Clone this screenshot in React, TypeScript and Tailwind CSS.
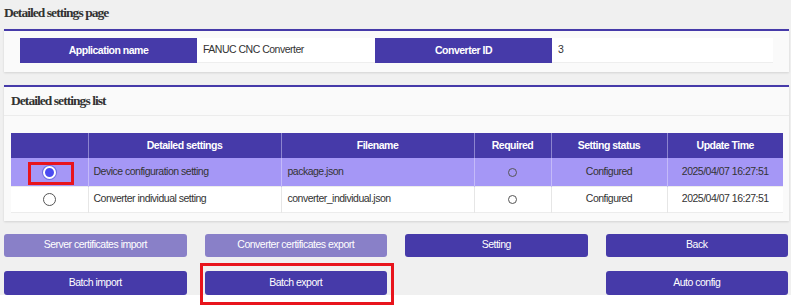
import React from "react";

const font = { fontFamily: '"Liberation Sans", Arial, sans-serif' };
const serif = { fontFamily: '"Liberation Serif", "Times New Roman", serif' };

function Radio({ checked }: { checked?: boolean }) {
  return checked ? (
    <span className="inline-block w-[13px] h-[13px] rounded-full bg-[#4b4cf0] border-[2px] border-white shadow-[0_0_0_1px_#6d6de0]" />
  ) : (
    <span className="inline-block w-[13px] h-[13px] rounded-full bg-white border border-[#555]" />
  );
}

export default function App() {
  const rows = [
    { name: "Device configuration setting", file: "package.json", sel: true },
    { name: "Converter individual setting", file: "converter_individual.json", sel: false },
  ];
  return (
    <div className="relative w-[791px] h-[306px] bg-white overflow-hidden tracking-[-0.5px]" style={font}>
      <div className="h-[295px] bg-[#f0f0f0] pl-[4px] pr-[2px]">
        <div className="h-[26px] flex items-center text-[13.5px] font-bold text-[#333] tracking-[-0.95px]" style={serif}>
          Detailed settings page
        </div>
        <div className="mt-[3px] bg-[#fafafa] border-t-[2px] border-[#463aa9] shadow-[0_1px_2px_rgba(0,0,0,0.12)] pt-[7px] pb-[9px] pl-[16px] pr-[16px]">
          <div className="flex h-[25px] text-[10.5px]">
            <div className="w-[177px] bg-[#463aa9] text-white font-bold flex items-center justify-center">Application name</div>
            <div className="w-[178px] bg-white text-[#333] flex items-center pl-[6px] border-b border-[#eee]">FANUC CNC Converter</div>
            <div className="w-[177px] bg-[#463aa9] text-white font-bold flex items-center justify-center">Converter ID</div>
            <div className="flex-1 bg-white text-[#333] flex items-center pl-[6px] border-b border-[#eee]">3</div>
          </div>
        </div>
        <div className="mt-[13px] bg-[#fafafa] border-t-[2px] border-[#463aa9] shadow-[0_1px_2px_rgba(0,0,0,0.12)] pb-[8px]">
          <div className="h-[29px] flex items-center pl-[7px] border-b border-[#ececec] text-[13.5px] font-bold text-[#333] tracking-[-0.95px]" style={serif}>
            Detailed settings list
          </div>
          <div className="pt-[17px] pl-[7px] pr-[6px]">
            <table className="w-full border-collapse text-[10.5px] table-fixed">
              <colgroup>
                <col className="w-[77px]" />
                <col className="w-[193px]" />
                <col className="w-[193px]" />
                <col className="w-[77px]" />
                <col className="w-[116px]" />
                <col />
              </colgroup>
              <thead>
                <tr className="h-[25px] bg-[#463aa9] text-white font-bold">
                  <th className="border-r border-[#8c84cf]"></th>
                  <th className="border-r border-[#8c84cf] font-bold">Detailed settings</th>
                  <th className="border-r border-[#8c84cf] font-bold">Filename</th>
                  <th className="border-r border-[#8c84cf] font-bold">Required</th>
                  <th className="border-r border-[#8c84cf] font-bold">Setting status</th>
                  <th className="font-bold">Update Time</th>
                </tr>
              </thead>
              <tbody className="text-[#333]">
                {rows.map((r, i) => (
                  <tr key={i} className={(r.sel ? "bg-[#a597f6] h-[28px]" : "bg-white h-[26px]") + " border-b border-[#ececec]"}>
                    <td className={"text-center border-r " + (r.sel ? "border-[#c4baf9]" : "border-[#e6e6e6]")}>
                      <span className="inline-flex items-center justify-center align-middle"><Radio checked={r.sel} /></span>
                    </td>
                    <td className={"pl-[5px] border-r " + (r.sel ? "border-[#c4baf9]" : "border-[#e6e6e6]")}>{r.name}</td>
                    <td className={"pl-[6px] border-r " + (r.sel ? "border-[#c4baf9]" : "border-[#e6e6e6]")}>{r.file}</td>
                    <td className={"text-center border-r " + (r.sel ? "border-[#c4baf9]" : "border-[#e6e6e6]")}>
                      <span className="inline-block align-middle w-[9px] h-[9px] rounded-full border border-[#555]" />
                    </td>
                    <td className={"text-center border-r " + (r.sel ? "border-[#c4baf9]" : "border-[#e6e6e6]")}>Configured</td>
                    <td className="text-center">2025/04/07 16:27:51</td>
                  </tr>
                ))}
              </tbody>
            </table>
          </div>
        </div>
        <div className="mt-[13px] grid grid-cols-4 gap-x-[18px] gap-y-[14px] pr-[1px] text-[10.5px] text-white">
          <button className="h-[23px] rounded-[3px] bg-[#8980c8]">Server certificates import</button>
          <button className="h-[23px] rounded-[3px] bg-[#8980c8]">Converter certificates export</button>
          <button className="h-[23px] rounded-[3px] bg-[#463aa9]">Setting</button>
          <button className="h-[23px] rounded-[3px] bg-[#463aa9]">Back</button>
          <button className="h-[24px] rounded-[3px] bg-[#463aa9]">Batch import</button>
          <button className="h-[24px] rounded-[3px] bg-[#463aa9]">Batch export</button>
          <div />
          <button className="h-[24px] rounded-[3px] bg-[#463aa9]">Auto config</button>
        </div>
      </div>
      <div className="absolute left-[28px] top-[162px] w-[46px] h-[23px] border-[3px] border-[#e8141c]" />
      <div className="absolute left-[200px] top-[263px] w-[194px] h-[42px] border-[3px] border-[#e8141c]" />
    </div>
  );
}
